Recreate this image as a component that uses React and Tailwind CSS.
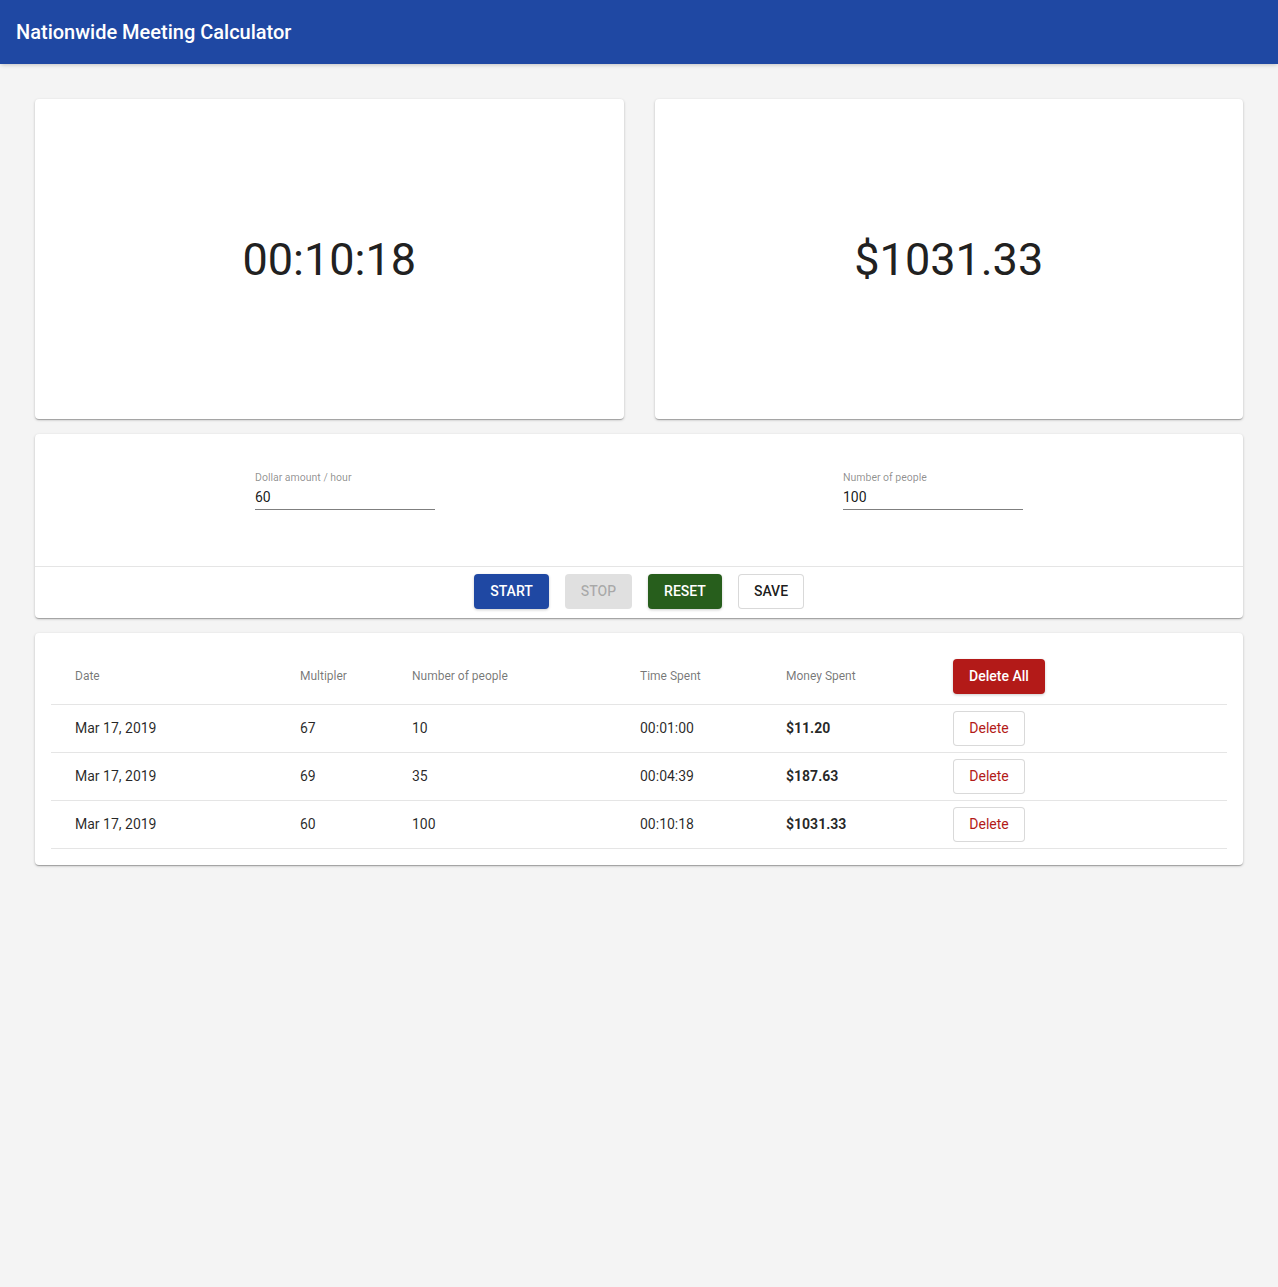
import React from "react";

const rows = [
  { date: "Mar 17, 2019", mult: "67", people: "10", time: "00:01:00", money: "$11.20" },
  { date: "Mar 17, 2019", mult: "69", people: "35", time: "00:04:39", money: "$187.63" },
  { date: "Mar 17, 2019", mult: "60", people: "100", time: "00:10:18", money: "$1031.33" },
];

const card = "bg-white rounded-[4px] shadow-[0_1px_3px_rgba(0,0,0,0.2),0_1px_1px_rgba(0,0,0,0.14),0_2px_1px_-1px_rgba(0,0,0,0.12)]";

const Field = ({ label, value }) => (
  <div className="w-[180px]">
    <label className="block text-[10.5px] leading-[13px] text-black/45 pt-[15px]">{label}</label>
    <div className="mt-[5px] border-b border-black/50 pb-[4px] text-[14px] leading-[16px] text-black/90">
      {value}
    </div>
  </div>
);

export default function App() {
  return (
    <div className="min-h-[1287px] bg-[#f4f4f4] font-['Roboto',sans-serif]">
      {/* App bar */}
      <header className="h-16 bg-[#1f48a3] flex items-center px-4 shadow-[0_2px_4px_-1px_rgba(0,0,0,0.2)]">
        <h1 className="text-[20px] font-medium text-white tracking-[0px]">Nationwide Meeting Calculator</h1>
      </header>

      <main className="px-[35px] pt-[35px] flex flex-col gap-[15px]">
        {/* Displays */}
        <div className="grid grid-cols-2 gap-[31px]">
          <div className={`${card} h-[320px] flex items-center justify-center`}>
            <span className="text-[45px] leading-none text-[#212121]">00:10:18</span>
          </div>
          <div className={`${card} h-[320px] flex items-center justify-center`}>
            <span className="text-[45px] leading-none text-[#212121]">$1031.33</span>
          </div>
        </div>

        {/* Inputs + controls */}
        <div className={`${card} h-[184px] flex flex-col`}>
          <div className="h-[132px] px-4 pt-[22px] flex justify-around">
            <Field label="Dollar amount / hour" value="60" />
            <Field label="Number of people" value="100" />
          </div>
          <div className="border-t border-black/10 flex justify-center gap-4 pt-[7px]">
            <button className="h-[35px] w-[75px] rounded-[4px] bg-[#1f48a3] text-white text-[14px] font-medium shadow-[0_1px_3px_rgba(0,0,0,0.2)]">
              START
            </button>
            <button className="h-[35px] w-[67px] rounded-[4px] bg-[#e0e0e0] text-black/25 text-[14px] font-medium">
              STOP
            </button>
            <button className="h-[35px] w-[74px] rounded-[4px] bg-[#275e1c] text-white text-[14px] font-medium shadow-[0_1px_3px_rgba(0,0,0,0.2)]">
              RESET
            </button>
            <button className="h-[35px] w-[66px] rounded-[4px] border border-black/15 bg-white text-black/90 text-[14px] font-medium">
              SAVE
            </button>
          </div>
        </div>

        {/* History table */}
        <div className={`${card} p-4`}>
          <table className="w-full border-collapse">
            <thead>
              <tr className="h-[55px] border-b border-black/10 text-left">
                <th className="w-[225px] pl-6 text-[12px] font-normal text-black/55">Date</th>
                <th className="w-[112px] pl-6 text-[12px] font-normal text-black/55">Multipler</th>
                <th className="w-[228px] pl-6 text-[12px] font-normal text-black/55">Number of people</th>
                <th className="w-[146px] pl-6 text-[12px] font-normal text-black/55">Time Spent</th>
                <th className="w-[167px] pl-6 text-[12px] font-normal text-black/55">Money Spent</th>
                <th className="pl-6">
                  <button className="h-[35px] w-[92px] rounded-[4px] bg-[#b31a18] text-white text-[14px] font-medium shadow-[0_1px_3px_rgba(0,0,0,0.2)]">
                    Delete All
                  </button>
                </th>
              </tr>
            </thead>
            <tbody>
              {rows.map((r, i) => (
                <tr key={i} className="h-[48px] border-b border-black/10 text-[14px] text-black/85">
                  <td className="pl-6">{r.date}</td>
                  <td className="pl-6">{r.mult}</td>
                  <td className="pl-6">{r.people}</td>
                  <td className="pl-6">{r.time}</td>
                  <td className="pl-6 font-bold">{r.money}</td>
                  <td className="pl-6">
                    <button className="h-[35px] w-[72px] rounded-[4px] border border-black/15 bg-white text-[#b31a18] text-[14px]">
                      Delete
                    </button>
                  </td>
                </tr>
              ))}
            </tbody>
          </table>
        </div>
      </main>
    </div>
  );
}
